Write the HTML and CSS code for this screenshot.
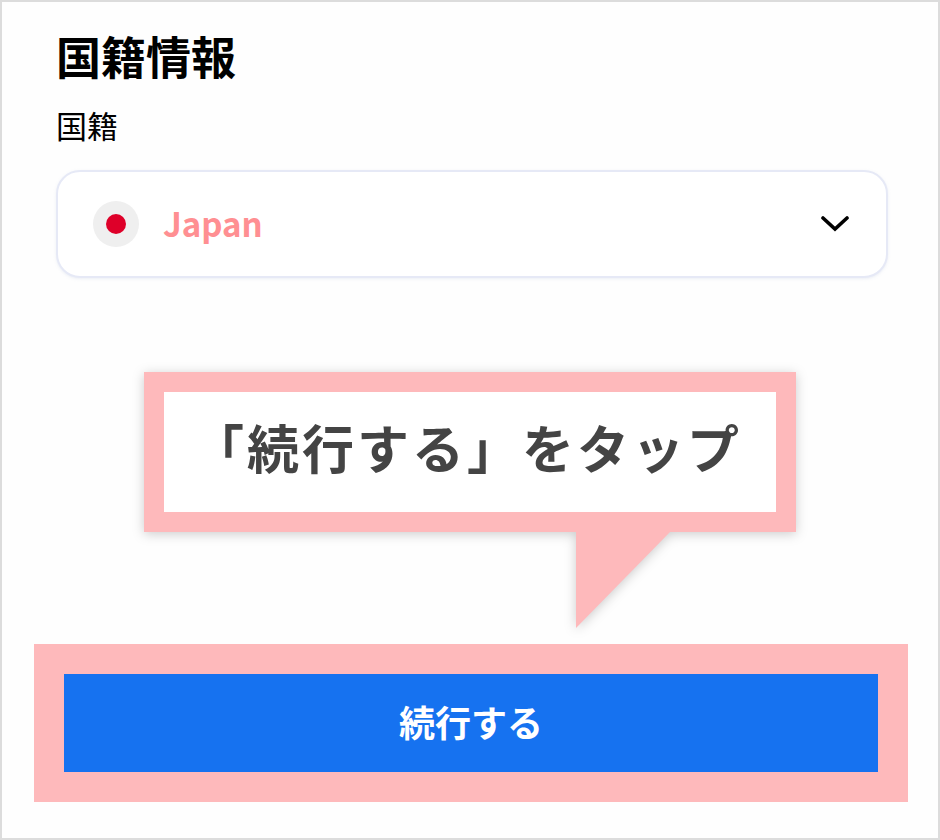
FILE: index.html
```html
<!DOCTYPE html>
<html lang="ja">
<head>
    <meta charset="UTF-8">
    <title>国籍情報</title>
    <link rel="stylesheet" href="styles.css">
</head>
<body>
    <div class="frame">
        <h1 class="title">国籍情報</h1>
        <div class="label">国籍</div>
        <div class="select">
            <span class="flag"><span class="flag-dot"></span></span>
            <span class="select-value">Japan</span>
            <svg class="chevron" width="28" height="18" viewBox="0 0 28 18">
                <path d="M2 3 L14 14 L26 3" fill="none" stroke="#000" stroke-width="3.6" stroke-linecap="round"/>
            </svg>
        </div>
        <div class="callout">
            <div class="callout-box">「続行する」をタップ</div>
            <div class="callout-tail"></div>
        </div>
        <div class="highlight">
            <button class="button">続行する</button>
        </div>
    </div>
</body>
</html>
```

FILE: styles.css
```css
* {
    box-sizing: border-box;
}
body {
    margin: 0;
    background-color: white;
    font-family: "Noto Sans CJK JP", "Noto Sans", sans-serif;
}
.frame {
    width: 940px;
    height: 840px;
    border: 2px solid #dcdcdc;
    padding: 26px 30px 0 32px;
    background-color: #fefefe;
    overflow: hidden;
}
.title {
    margin: 0 0 0 22px;
    font-size: 45px;
    line-height: 56px;
    font-weight: 700;
    color: black;
}
.label {
    margin: 19px 0 0 22px;
    font-size: 31px;
    line-height: 44px;
    color: black;
}
.select {
    display: flex;
    align-items: center;
    width: 832px;
    height: 108px;
    margin: 23px 0 0 22px;
    padding: 0 36px 0 35px;
    background-color: white;
    border: 2px solid #e6e9f6;
    border-radius: 24px;
    box-shadow: 0 1px 3px rgba(180, 190, 220, 0.25);
}
.flag {
    display: flex;
    align-items: center;
    justify-content: center;
    width: 46px;
    height: 46px;
    background-color: #efefef;
    border-radius: 50%;
}
.flag-dot {
    width: 20px;
    height: 20px;
    background-color: #de0029;
    border-radius: 50%;
}
.select-value {
    flex: 1;
    margin-left: 24px;
    padding-bottom: 2px;
    font-size: 33px;
    font-weight: 700;
    color: #ff8f92;
}
.chevron {
    margin-right: 1px;
}
.callout {
    position: relative;
    width: 652px;
    height: 160px;
    margin: 94px 0 0 110px;
    filter: drop-shadow(0 2px 6px rgba(0, 0, 0, 0.2));
}
.callout-box {
    position: relative;
    z-index: 1;
    height: 160px;
    padding-right: 6px;
    border: 20px solid #feb9bb;
    background-color: white;
    font-size: 52px;
    font-weight: 700;
    line-height: 110px;
    letter-spacing: 3px;
    text-align: center;
    white-space: nowrap;
    color: #444;
}
.callout-tail {
    position: absolute;
    left: 432px;
    top: 158px;
    width: 96px;
    height: 98px;
    background-color: #feb9bb;
    clip-path: polygon(0 0, 100% 0, 0 100%);
}
.highlight {
    width: 874px;
    height: 158px;
    margin-top: 112px;
    padding: 30px;
    background-color: #feb9bb;
}
.button {
    display: block;
    width: 100%;
    height: 98px;
    padding: 0 0 4px;
    border: none;
    background-color: #1672f0;
    font-family: inherit;
    font-size: 36px;
    font-weight: 700;
    color: white;
}
```
